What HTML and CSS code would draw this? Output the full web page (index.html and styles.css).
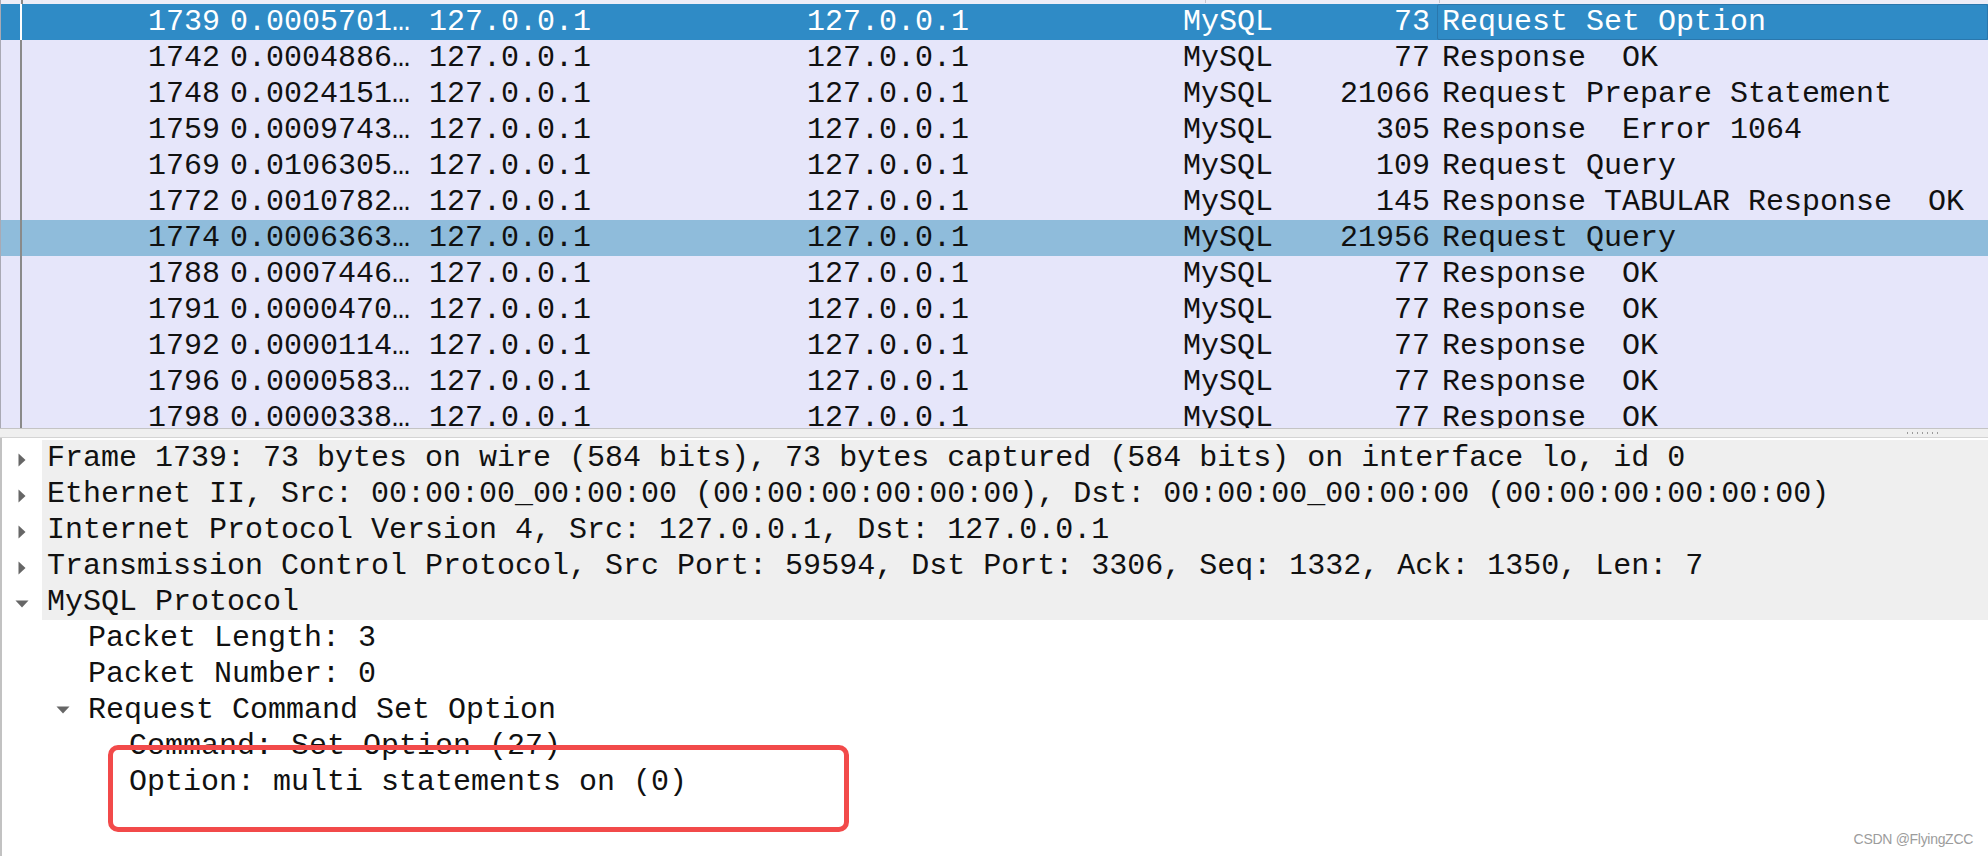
FILE: index.html
```html
<!DOCTYPE html>
<html>
<head>
<meta charset="utf-8">
<link rel="stylesheet" href="styles.css">
</head>
<body>
<div class="app">
  <div class="plist">
    <div class="plist-top"><span class="hmark m1"></span><span class="hmark m2"></span></div>
    <div class="row sel"><span class="c-mark"></span><span class="c-no">1739</span><span class="c-time">0.0005701…</span><span class="c-src">127.0.0.1</span><span class="c-dst">127.0.0.1</span><span class="c-proto">MySQL</span><span class="c-len">73</span><span class="c-info">Request Set Option</span></div>
    <div class="row"><span class="c-mark"></span><span class="c-no">1742</span><span class="c-time">0.0004886…</span><span class="c-src">127.0.0.1</span><span class="c-dst">127.0.0.1</span><span class="c-proto">MySQL</span><span class="c-len">77</span><span class="c-info">Response  OK</span></div>
    <div class="row"><span class="c-mark"></span><span class="c-no">1748</span><span class="c-time">0.0024151…</span><span class="c-src">127.0.0.1</span><span class="c-dst">127.0.0.1</span><span class="c-proto">MySQL</span><span class="c-len">21066</span><span class="c-info">Request Prepare Statement</span></div>
    <div class="row"><span class="c-mark"></span><span class="c-no">1759</span><span class="c-time">0.0009743…</span><span class="c-src">127.0.0.1</span><span class="c-dst">127.0.0.1</span><span class="c-proto">MySQL</span><span class="c-len">305</span><span class="c-info">Response  Error 1064</span></div>
    <div class="row"><span class="c-mark"></span><span class="c-no">1769</span><span class="c-time">0.0106305…</span><span class="c-src">127.0.0.1</span><span class="c-dst">127.0.0.1</span><span class="c-proto">MySQL</span><span class="c-len">109</span><span class="c-info">Request Query</span></div>
    <div class="row"><span class="c-mark"></span><span class="c-no">1772</span><span class="c-time">0.0010782…</span><span class="c-src">127.0.0.1</span><span class="c-dst">127.0.0.1</span><span class="c-proto">MySQL</span><span class="c-len">145</span><span class="c-info">Response TABULAR Response  OK</span></div>
    <div class="row rel"><span class="c-mark"></span><span class="c-no">1774</span><span class="c-time">0.0006363…</span><span class="c-src">127.0.0.1</span><span class="c-dst">127.0.0.1</span><span class="c-proto">MySQL</span><span class="c-len">21956</span><span class="c-info">Request Query</span></div>
    <div class="row"><span class="c-mark"></span><span class="c-no">1788</span><span class="c-time">0.0007446…</span><span class="c-src">127.0.0.1</span><span class="c-dst">127.0.0.1</span><span class="c-proto">MySQL</span><span class="c-len">77</span><span class="c-info">Response  OK</span></div>
    <div class="row"><span class="c-mark"></span><span class="c-no">1791</span><span class="c-time">0.0000470…</span><span class="c-src">127.0.0.1</span><span class="c-dst">127.0.0.1</span><span class="c-proto">MySQL</span><span class="c-len">77</span><span class="c-info">Response  OK</span></div>
    <div class="row"><span class="c-mark"></span><span class="c-no">1792</span><span class="c-time">0.0000114…</span><span class="c-src">127.0.0.1</span><span class="c-dst">127.0.0.1</span><span class="c-proto">MySQL</span><span class="c-len">77</span><span class="c-info">Response  OK</span></div>
    <div class="row"><span class="c-mark"></span><span class="c-no">1796</span><span class="c-time">0.0000583…</span><span class="c-src">127.0.0.1</span><span class="c-dst">127.0.0.1</span><span class="c-proto">MySQL</span><span class="c-len">77</span><span class="c-info">Response  OK</span></div>
    <div class="row"><span class="c-mark"></span><span class="c-no">1798</span><span class="c-time">0.0000338…</span><span class="c-src">127.0.0.1</span><span class="c-dst">127.0.0.1</span><span class="c-proto">MySQL</span><span class="c-len">77</span><span class="c-info">Response  OK</span></div>
  </div>
  <div class="splitter"><span class="grip"></span></div>
  <div class="details">
    <div class="drow top"><span class="twisty"><svg width="8" height="14" viewBox="0 0 8 14"><path d="M0.5 0.5 L7.5 7 L0.5 13.5 Z" fill="#666"/></svg></span><span class="label">Frame 1739: 73 bytes on wire (584 bits), 73 bytes captured (584 bits) on interface lo, id 0</span></div>
    <div class="drow top"><span class="twisty"><svg width="8" height="14" viewBox="0 0 8 14"><path d="M0.5 0.5 L7.5 7 L0.5 13.5 Z" fill="#666"/></svg></span><span class="label">Ethernet II, Src: 00:00:00_00:00:00 (00:00:00:00:00:00), Dst: 00:00:00_00:00:00 (00:00:00:00:00:00)</span></div>
    <div class="drow top"><span class="twisty"><svg width="8" height="14" viewBox="0 0 8 14"><path d="M0.5 0.5 L7.5 7 L0.5 13.5 Z" fill="#666"/></svg></span><span class="label">Internet Protocol Version 4, Src: 127.0.0.1, Dst: 127.0.0.1</span></div>
    <div class="drow top"><span class="twisty"><svg width="8" height="14" viewBox="0 0 8 14"><path d="M0.5 0.5 L7.5 7 L0.5 13.5 Z" fill="#666"/></svg></span><span class="label">Transmission Control Protocol, Src Port: 59594, Dst Port: 3306, Seq: 1332, Ack: 1350, Len: 7</span></div>
    <div class="drow top"><span class="twisty"><svg width="14" height="8" viewBox="0 0 14 8"><path d="M0.5 0.5 L13.5 0.5 L7 7.5 Z" fill="#666"/></svg></span><span class="label">MySQL Protocol</span></div>
    <div class="drow l1"><span class="twisty"></span><span class="label">Packet Length: 3</span></div>
    <div class="drow l1"><span class="twisty"></span><span class="label">Packet Number: 0</span></div>
    <div class="drow l1"><span class="twisty"><svg width="14" height="8" viewBox="0 0 14 8"><path d="M0.5 0.5 L13.5 0.5 L7 7.5 Z" fill="#666"/></svg></span><span class="label">Request Command Set Option</span></div>
    <div class="drow l2"><span class="twisty"></span><span class="label">Command: Set Option (27)</span></div>
    <div class="drow l2"><span class="twisty"></span><span class="label">Option: multi statements on (0)</span></div>
    <div class="highlight-box"></div>
  </div>
  <div class="watermark">CSDN @FlyingZCC</div>
</div>
</body>
</html>
```

FILE: styles.css
```css
* { box-sizing: border-box; }
html, body {
  margin: 0;
  padding: 0;
  background: #ffffff;
}
.app {
  position: relative;
  width: 1988px;
  height: 856px;
  overflow: hidden;
  display: flex;
  flex-direction: column;
  font-family: "Liberation Mono", "DejaVu Sans Mono", monospace;
  font-size: 30px;
  color: #111111;
}

/* ---------- packet list ---------- */
.plist {
  height: 428px;
  flex: none;
  background: #e6e6fa;
  border-left: 1px solid #a9a9b4;
  overflow: hidden;
  display: flex;
  flex-direction: column;
}
.plist-top {
  height: 4px;
  flex: none;
  background: #ededf7;
  position: relative;
}
.plist-top::before {
  content: "";
  position: absolute;
  left: 20px;
  top: 0;
  width: 2px;
  height: 4px;
  background: #8a8a8a;
}
.hmark {
  position: absolute;
  top: 0;
  width: 1px;
  height: 3px;
  background: #c4c4cc;
}
.hmark.m1 { left: 1204px; }
.hmark.m2 { left: 1438px; }

.row {
  height: 36px;
  flex: none;
  display: flex;
  align-items: stretch;
  line-height: 36px;
  white-space: pre;
}
.row.sel { background: #2f8bc6; color: #ffffff; }
.row.rel { background: #8fbcdb; }

.c-mark {
  width: 21px;
  flex: none;
  border-right: 2px solid #8a8a8a;
}
.row.sel .c-mark { border-right-color: #ffffff; }
.c-no { width: 198px; flex: none; text-align: right; }
.c-time { width: 199px; flex: none; margin-left: 10px; }
.c-src { width: 378px; flex: none; }
.c-dst { width: 376px; flex: none; }
.c-proto { width: 150px; flex: none; }
.c-len { width: 97px; flex: none; text-align: right; }
.c-info {
  flex: 1;
  margin-left: 7px;
  padding-left: 4px;
  border: 1px solid transparent;
  line-height: 34px;
}
.row.sel .c-info {
  border-color: #2a77ad;
  border-radius: 2px;
}

/* ---------- splitter ---------- */
.splitter {
  height: 10px;
  flex: none;
  background: #efefef;
  border-top: 1px solid #c4c4c4;
  border-bottom: 1px solid #d4d4d4;
  position: relative;
}
.grip {
  position: absolute;
  left: 1905px;
  top: 3px;
  width: 34px;
  height: 2px;
  background-image: radial-gradient(circle, #9a9a9a 0.8px, transparent 1px);
  background-size: 5px 2px;
}

/* ---------- details ---------- */
.details {
  flex: 1;
  position: relative;
  background: #ffffff;
  border-left: 2px solid #c2c2c2;
  padding-top: 2px;
  display: flex;
  flex-direction: column;
}
.drow {
  height: 36px;
  flex: none;
  display: flex;
  align-items: stretch;
  line-height: 36px;
  white-space: pre;
}
.twisty {
  width: 40px;
  flex: none;
  display: flex;
  align-items: center;
  justify-content: center;
  padding-right: 1px;
}
.drow.top .twisty svg { margin-top: 4px; }
.label {
  flex: 1;
  padding-left: 5px;
}
.drow.top .label { background: #efefef; }
.drow.l1 { padding-left: 41px; }
.drow.l2 { padding-left: 82px; }

.highlight-box {
  position: absolute;
  left: 106px;
  top: 307px;
  width: 741px;
  height: 87px;
  border: 5px solid #f24a4a;
  border-radius: 10px;
}

.watermark {
  position: absolute;
  right: 15px;
  bottom: 9px;
  font-family: "Liberation Sans", Arial, sans-serif;
  font-size: 14px;
  letter-spacing: -0.3px;
  color: #9c9c9c;
}
```
